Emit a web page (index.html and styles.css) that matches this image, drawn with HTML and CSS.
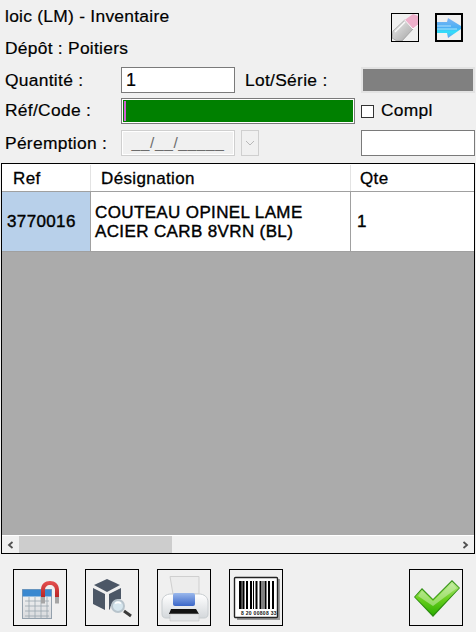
FILE: index.html
```html
<!DOCTYPE html>
<html lang="fr">
<head>
<meta charset="utf-8">
<title>Inventaire</title>
<link rel="stylesheet" href="styles.css">
</head>
<body>
<div class="app">
  <header class="head">
    <div class="titles">
      <div class="line">loic (LM) - Inventaire</div>
      <div class="line">Dépôt : Poitiers</div>
    </div>
    <div class="tools">
      <button class="tool"><svg viewBox="0 0 26 27" width="26" height="27">
        <defs><linearGradient id="er" x1="0" y1="0" x2="1" y2="1"><stop offset="0" stop-color="#eeeeee"/><stop offset="1" stop-color="#a4a4a4"/></linearGradient></defs>
        <path d="M12.700 6 1 17 0 24 5 27 10 27 21 15Z" fill="url(#er)" stroke="#8e8e8e" stroke-width=".6"/>
        <path d="M12.700 6 21 0 26 2 26 11 21 15Z" fill="#eeb0cb"/>
        <path d="M12.700 6 21 15 26 11" stroke="#fff" stroke-width="1" fill="none"/>
        <path d="M3 18 13 8" stroke="#fafafa" stroke-width="1.300" fill="none"/>
      </svg></button>
      <button class="tool tool-active"><svg viewBox="0 0 24 25" width="24" height="25">
        <defs><linearGradient id="ar" x1="0" y1="0" x2="0" y2="1"><stop offset="0" stop-color="#7fb4f4"/><stop offset=".5" stop-color="#4ab0f4"/><stop offset=".7" stop-color="#2fe0fa"/><stop offset="1" stop-color="#6a9cf0"/></linearGradient></defs>
        <path d="M0 7H10L11 3 24 11 24 14 11 23 10 18H0Z" fill="url(#ar)"/>
        <path d="M0 11H14M0 14H20" stroke="#c8ecff" stroke-width=".8" fill="none"/>
      </svg></button>
    </div>
  </header>

  <div class="form">
    <div class="row">
      <label class="lbl">Quantité :</label>
      <div class="field field-plain val">1</div>
      <label class="lbl lbl2">Lot/Série :</label>
      <div class="field field-lot"></div>
    </div>
    <div class="row row-code">
      <label class="lbl">Réf/Code :</label>
      <div class="field field-code"><span class="caret"></span></div>
      <span class="check"></span>
      <label class="lbl">Compl</label>
    </div>
    <div class="row row-last">
      <label class="lbl">Péremption :</label>
      <div class="field field-date">__/__/_____</div>
      <div class="combo"><svg viewBox="0 0 10 6" width="10" height="6"><path d="M1 1 5 5 9 1" fill="none" stroke="#b8b8b8"/></svg></div>
      <div class="field field-last"></div>
    </div>
  </div>

  <div class="grid">
    <div class="thead">
      <div class="c c1 th">Ref</div>
      <div class="c c2 th">Désignation</div>
      <div class="c c3 th">Qte</div>
    </div>
    <div class="trow">
      <div class="c c1 td sel">3770016</div>
      <div class="c c2 td">COUTEAU OPINEL LAME<br>ACIER CARB 8VRN (BL)</div>
      <div class="c c3 td">1</div>
    </div>
    <div class="empty"></div>
    <div class="hscroll">
      <svg class="sarrow" viewBox="0 0 7 8" width="7" height="8"><path d="M5.500 1 2 4 5.500 7" fill="none" stroke="#505050" stroke-width="1.800"/></svg>
      <div class="track"><div class="thumb"></div></div>
      <svg class="sarrow" viewBox="0 0 7 8" width="7" height="8"><path d="M1.500 1 5 4 1.500 7" fill="none" stroke="#505050" stroke-width="1.800"/></svg>
    </div>
  </div>

  <footer class="foot">
    <button class="btn"><svg viewBox="0 0 52 55" width="52" height="55">
      <defs>
        <linearGradient id="mg" x1="0" y1="0" x2="0" y2="1"><stop offset="0" stop-color="#e65050"/><stop offset="1" stop-color="#a81616"/></linearGradient>
        <linearGradient id="cal" x1="0" y1="0" x2="0" y2="1"><stop offset="0" stop-color="#f6f6f6"/><stop offset="1" stop-color="#d8dadd"/></linearGradient>
      </defs>
      <rect x="8.500" y="19.500" width="29" height="29" fill="url(#cal)" stroke="#93a0ac" stroke-width="1"/>
      <rect x="8.500" y="19.500" width="29" height="7" fill="#3a88d0"/>
      <path d="M11 31H35M11 36H35M11 41H35M11 46H35M15 27V48M21 27V48M27 27V48M33 27V48" stroke="#9aa6ae" stroke-width=".8"/>
      <path d="M27 33V20C27 14 31 11 36 11 41 11 45 14 45 20V33H41V20C41 17 39 15 36 15 33 15 31 17 31 20V33Z" fill="url(#mg)"/>
      <rect x="27" y="27" width="4" height="6.500" fill="#a5a5a5"/>
      <rect x="41" y="27" width="4" height="6.500" fill="#a5a5a5"/>
    </svg></button>
    <button class="btn"><svg viewBox="0 0 52 55" width="52" height="55">
      <path d="M21 9 34 15 21 22 8 15Z" fill="#4c5766"/>
      <path d="M7 18 19 24V40L7 34Z" fill="#4c5766"/>
      <path d="M23 24 35 18V29C29 29 25 33 24 39L23 40Z" fill="#4c5766"/>
      <circle cx="32" cy="36" r="6" fill="#d6e6ee" stroke="#b8c4cc" stroke-width="2"/>
      <path d="M29 33.500C31 32 33 32 35 33.500" stroke="#fff" stroke-width="1.500" fill="none"/>
      <path d="M38 41 45 46" stroke="#3a3a3a" stroke-width="3"/>
    </svg></button>
    <button class="btn"><svg viewBox="0 0 52 55" width="52" height="55">
      <defs>
        <linearGradient id="pb" x1="0" y1="0" x2="0" y2="1"><stop offset="0" stop-color="#ffffff"/><stop offset="1" stop-color="#d4d8db"/></linearGradient>
        <linearGradient id="pbl" x1="0" y1="0" x2="0" y2="1"><stop offset="0" stop-color="#9ab8ec"/><stop offset="1" stop-color="#3a66c8"/></linearGradient>
      </defs>
      <path d="M12 6.500H41V24H15Z" fill="#ececec" stroke="#cfcfcf"/>
      <path d="M4 32C4 27 8 24 13 24H41C46 24 50 27 50 32V44C50 47 48 48 46 48H8C6 48 4 47 4 44Z" fill="url(#pb)" stroke="#c8cdd0"/>
      <rect x="15" y="23" width="22" height="13" rx="2" fill="url(#pbl)"/>
      <path d="M11 44 13 39H38L41 44Z" fill="#111"/>
      <path d="M12 44H41V51H12Z" fill="#e2e4e6" stroke="#c8c8c8" stroke-width=".6"/>
    </svg></button>
    <button class="btn"><svg viewBox="0 0 52 55" width="52" height="55">
      <path d="M47 9H50V50H7V47H47Z" fill="#9c9c9c"/>
      <rect x="4.500" y="7.500" width="43" height="40" rx="1" fill="#fff" stroke="#222" stroke-width="1.400"/>
      <path d="M10 11V39M13.500 11V39M17 11V39M21 11V39M26.500 11V39M30.500 11V39M35.500 11V39M39 11V39M43 11V39" stroke="#000" stroke-width="2"/>
      <path d="M11.800 11V39M23.500 11V39M33 11V39" stroke="#000" stroke-width="1"/>
      <text class="digits" x="11" y="45">8 20 00808 33</text>
    </svg></button>
    <button class="btn btn-ok"><svg viewBox="0 0 52 55" width="52" height="55">
      <defs><linearGradient id="ok" x1="0" y1="0" x2="0" y2="1"><stop offset="0" stop-color="#b8e890"/><stop offset=".5" stop-color="#6cd020"/><stop offset="1" stop-color="#2eb000"/></linearGradient></defs>
      <path d="M4 27 12 18 23 29 42 10 50 18 23 47Z" fill="#2c8c10"/>
      <path d="M5 27 12 19.500 23 30 42 11.500 49 18 23 45Z" fill="url(#ok)"/>
      <path d="M12 20.500 23 31 42 13 47 18 23 36 8 26Z" fill="#d8f2c0" opacity=".5"/>
    </svg></button>
  </footer>
</div>
</body>
</html>
```
FILE: styles.css
```css
* { box-sizing: border-box; }
html, body { margin: 0; padding: 0; }
body { width: 476px; height: 632px; overflow: hidden; background: #f0f0f0; font-family: "Liberation Sans", Arial, sans-serif; color: #000; }
.app { display: flex; flex-direction: column; height: 632px; padding: 0 1px; }

.head { display: flex; justify-content: space-between; height: 67px; padding: 6px 12px 0 4px; }
.titles { display: flex; flex-direction: column; gap: 11px; }
.line { font-size: 17.4px; line-height: 21px; letter-spacing: .27px; -webkit-text-stroke: .2px #000; }
.tools { display: flex; gap: 16px; padding-top: 7px; align-items: flex-start; }
.tool { width: 28px; height: 29px; padding: 0; border: 1px solid #000; background: #f0f0f0; display: flex; overflow: hidden; }
.tool-active { border-width: 2px; }

.form { display: flex; flex-direction: column; gap: 5px; padding-left: 4px; height: 96px; }
.row { display: flex; align-items: center; height: 26px; }
.row-last { margin-top: 1px; }
.row-code > .lbl { padding-bottom: 2px; }
.lbl { font-size: 17.4px; letter-spacing: .3px; -webkit-text-stroke: .2px #000; white-space: nowrap; }
.row > .lbl:first-child { width: 116px; }
.lbl2 { width: 126px; padding-left: 10px; }
.field { height: 26px; }
.val { font-size: 18px; line-height: 24px; padding-left: 4px; -webkit-text-stroke: .2px #000; }
.field-plain { width: 114px; background: #fff; border: 1px solid #7a7a7a; }
.field-lot { width: 114px; background: #808080; border: 2px solid #e3e3e3; }
.field-code { width: 234px; background: #008000; border: 1px solid #7a7a7a; box-shadow: inset 0 0 0 1px #fff; padding: 2px; }
.caret { display: block; width: 2px; height: 20px; background: #d060d0; }
.check { width: 13px; height: 13px; border: 1px solid #333; background: #fff; margin: 0 7px 0 6px; }
.field-date { width: 114px; background: #f0f0f0; border: 1px solid #cfcfcf; box-shadow: inset 0 0 0 1px #fff; color: #6d6d6d; font-size: 15.5px; line-height: 24px; text-align: center; letter-spacing: .6px; }
.combo { width: 18px; height: 26px; margin-left: 6px; border: 1px solid #cfcfcf; display: flex; align-items: center; justify-content: center; background: #f0f0f0; }
.field-last { width: 114px; margin-left: 102px; background: #fff; border: 1px solid #7a7a7a; }

.grid { flex: none; height: 391px; display: flex; flex-direction: column; border: 1px solid #000; background: #ababab; }
.thead { display: flex; height: 28px; background: #fff; border-top: 1px solid #fff; border-bottom: 1px solid #a0a0a0; }
.trow { display: flex; height: 60px; background: #fff; border-bottom: 1px solid #a0a0a0; }
.c { display: flex; align-items: center; }
.c1 { width: 89px; }
.c2 { width: 260px; }
.c3 { flex: 1; }
.th { font-size: 17px; letter-spacing: .37px; -webkit-text-stroke: .3px #000; border-right: 1px solid #e3e3e3; padding-left: 11px; padding-top: 2px; }
.th.c2 { padding-left: 10px; }
.th.c3 { border-right: 0; padding-left: 9px; }
.td { font-size: 17px; letter-spacing: .37px; line-height: 19px; -webkit-text-stroke: .4px #000; padding-left: 5px; border-right: 1px solid #a0a0a0; }
.td.c2 { padding-left: 4px; }
.td.c3 { border-right: 0; padding-left: 6px; }
.sel { background: #b8d0ea; }
.empty { flex: 1; background: #ababab; }
.hscroll { display: flex; align-items: center; height: 18px; background: #f0f0f0; border-top: 1px solid #fff; }
.sarrow { flex: none; margin: 0 5px; }
.track { flex: 1; height: 100%; }
.thumb { width: 153px; height: 100%; background: #cdcdcd; }

.foot { display: flex; padding: 15px 0 0 12px; gap: 18px; }
.btn { width: 54px; height: 57px; padding: 0; border: 1px solid #000; background: #f0f0f0; display: flex; align-items: center; justify-content: center; overflow: hidden; }
.btn-ok { margin-left: 108px; }
.digits { font-family: "Liberation Sans", Arial, sans-serif; font-size: 5px; font-weight: 700; letter-spacing: .3px; fill: #111; }
```
